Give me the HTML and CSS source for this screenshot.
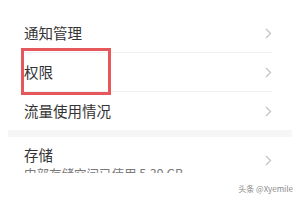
FILE: index.html
```html
<!DOCTYPE html>
<html lang="zh-CN">
<head>
<meta charset="utf-8">
<link rel="stylesheet" href="styles.css">
</head>
<body>
<div class="page">
  <div class="group">
    <div class="row"><span class="title">通知管理</span><svg class="chev" width="7" height="11" viewBox="0 0 7 11"><polyline points="1,1 5.5,5.5 1,10" /></svg></div>
    <div class="row"><span class="title">权限</span><svg class="chev" width="7" height="11" viewBox="0 0 7 11"><polyline points="1,1 5.5,5.5 1,10" /></svg></div>
    <div class="row last"><span class="title">流量使用情况</span><svg class="chev" width="7" height="11" viewBox="0 0 7 11"><polyline points="1,1 5.5,5.5 1,10" /></svg></div>
  </div>
  <div class="band"></div>
  <div class="clip">
    <div class="row tall">
      <div class="texts">
        <span class="title">存储</span>
        <span class="sub">内部存储空间已使用 5.39 GB</span>
      </div>
      <svg class="chev" width="7" height="11" viewBox="0 0 7 11"><polyline points="1,1 5.5,5.5 1,10" /></svg>
    </div>
  </div>
  <div class="highlight"></div>
  <div class="mark">头条 @Xyemile</div>
</div>
</body>
</html>
```
FILE: styles.css
```css
html, body {
  margin: 0;
  padding: 0;
  background: #ffffff;
}
.page {
  position: relative;
  width: 300px;
  height: 200px;
  overflow: hidden;
  background: #ffffff;
  font-family: "Noto Sans CJK SC", "Noto Sans", sans-serif;
  color: #333333;
}
.group {
  padding: 14px 28px 0 24px;
}
.row {
  display: flex;
  align-items: center;
  justify-content: space-between;
  height: 38px;
  border-bottom: 1px solid #f1f1f1;
}
.row.last {
  border-bottom: none;
}
.title {
  font-size: 14.5px;
  line-height: 20px;
}
.chev {
  display: block;
}
.chev polyline {
  fill: none;
  stroke: #c6c6c6;
  stroke-width: 1.4;
}
.band {
  height: 7px;
  margin: 0 8px;
  background: #f6f6f6;
}
.clip {
  height: 36px;
  overflow: hidden;
  padding: 0 28px 0 24px;
}
.row.tall {
  height: 46px;
  border-bottom: none;
  align-items: center;
}
.texts {
  display: flex;
  flex-direction: column;
  align-self: flex-start;
  padding-top: 8px;
}
.sub {
  font-size: 12.5px;
  line-height: 18px;
  color: #7a7a7a;
}
.highlight {
  position: absolute;
  left: 21px;
  top: 48px;
  width: 84px;
  height: 41px;
  border: 3px solid #e6585b;
}
.mark {
  position: absolute;
  right: 7px;
  top: 184px;
  font-size: 8px;
  line-height: 10px;
  color: #8a8a8a;
  text-shadow: 0 0 1px #ffffff;
}
```
